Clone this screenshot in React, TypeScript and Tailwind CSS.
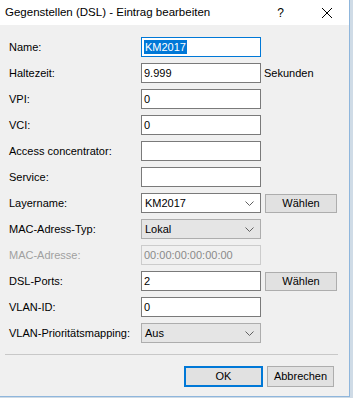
import React from "react";

const font = { fontFamily: '"Liberation Sans", Arial, sans-serif' };

function Chevron() {
  return (
    <svg viewBox="0 0 9 5" className="w-[9px] h-[5px] text-[#606060]" fill="none" stroke="currentColor" strokeWidth="1">
      <polyline points="0.5 0.5 4.5 4.5 8.5 0.5" />
    </svg>
  );
}

function Row({ label, disabled, children }: { label: string; disabled?: boolean; children: React.ReactNode }) {
  return (
    <div className="flex items-center h-[20px]">
      <div className={`w-[132px] shrink-0 text-[11px] ${disabled ? "text-[#a0a0a0]" : "text-black"}`}>{label}</div>
      {children}
    </div>
  );
}

function TextBox({ value, focused }: { value?: string; focused?: boolean }) {
  return (
    <div
      className={`w-[120px] h-[20px] bg-white border flex items-center pl-[2px] text-[11px] text-black ${
        focused ? "border-[#0078d7]" : "border-[#7a7a7a]"
      }`}
    >
      {focused ? <span className="bg-[#0078d7] text-white px-[1px] leading-[14px]">{value}</span> : value}
    </div>
  );
}

function Combo({ value, grey }: { value: string; grey?: boolean }) {
  return (
    <div
      className={`w-[120px] h-[20px] border flex items-center justify-between pl-[3px] pr-[6px] text-[11px] text-black ${
        grey ? "bg-[#e5e5e5] border-[#adadad]" : "bg-white border-[#7a7a7a]"
      }`}
    >
      <span>{value}</span>
      <Chevron />
    </div>
  );
}

function Btn({ label, w, primary }: { label: string; w: string; primary?: boolean }) {
  return (
    <div
      className={`${w} h-full bg-[#e1e1e1] flex items-center justify-center text-[11px] text-black ${
        primary ? "border-2 border-[#0078d7]" : "border border-[#adadad]"
      }`}
    >
      {label}
    </div>
  );
}

export default function App() {
  return (
    <div className="w-[353px] h-[398px] bg-[#cfdbe6] flex overflow-hidden" style={font}>
      <div className="w-[350px] h-[397px] bg-[#f0f0f0] border-r border-b border-[#8fb6dc] flex flex-col">
        {/* Title bar */}
        <div className="h-[25px] bg-white flex items-center shrink-0">
          <span className="pl-[5px] text-[11.5px] text-black">
            Gegenstellen (DSL) - Eintrag bearbeiten
          </span>
          <div className="flex-1" />
          <span className="text-[12px] text-black mr-[38px]">?</span>
          <svg viewBox="0 0 10 10" className="w-[10px] h-[10px] mr-[17px]" stroke="#000" strokeWidth="1" fill="none">
            <line x1="0" y1="0" x2="10" y2="10" />
            <line x1="10" y1="0" x2="0" y2="10" />
          </svg>
        </div>

        {/* Form */}
        <div className="flex flex-col gap-[6px] pl-[9px] pt-[12px]">
          <Row label="Name:">
            <TextBox value="KM2017" focused />
          </Row>
          <Row label="Haltezeit:">
            <TextBox value="9.999" />
            <span className="ml-[3px] text-[11px] text-black">Sekunden</span>
          </Row>
          <Row label="VPI:">
            <TextBox value="0" />
          </Row>
          <Row label="VCI:">
            <TextBox value="0" />
          </Row>
          <Row label="Access concentrator:">
            <TextBox />
          </Row>
          <Row label="Service:">
            <TextBox />
          </Row>
          <Row label="Layername:">
            <Combo value="KM2017" />
            <div className="ml-[4px] h-[19px]">
              <Btn label="Wählen" w="w-[72px]" />
            </div>
          </Row>
          <Row label="MAC-Adress-Typ:">
            <Combo value="Lokal" grey />
          </Row>
          <Row label="MAC-Adresse:" disabled>
            <div className="w-[120px] h-[20px] bg-[#f0f0f0] border border-[#cccccc] flex items-center pl-[2px] text-[11px] text-[#8a8a8a]">
              00:00:00:00:00:00
            </div>
          </Row>
          <Row label="DSL-Ports:">
            <TextBox value="2" />
            <div className="ml-[4px] h-[19px]">
              <Btn label="Wählen" w="w-[72px]" />
            </div>
          </Row>
          <Row label="VLAN-ID:">
            <TextBox value="0" />
          </Row>
          <Row label="VLAN-Prioritätsmapping:">
            <Combo value="Aus" grey />
          </Row>
        </div>

        {/* Separator */}
        <div className="mt-[11px] ml-[5px] w-[333px] h-px bg-[#c8c8c8]" />

        {/* Buttons */}
        <div className="mt-[11px] h-[21px] flex justify-end gap-[4px] pr-[15px]">
          <Btn label="OK" w="w-[79px]" primary />
          <Btn label="Abbrechen" w="w-[67px]" />
        </div>
      </div>
    </div>
  );
}
